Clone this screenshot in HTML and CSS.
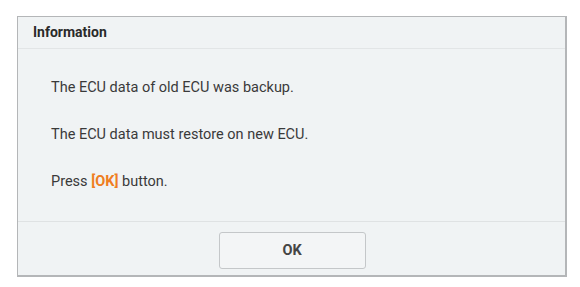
FILE: index.html
```html
<!DOCTYPE html>
<html>
<head>
<meta charset="utf-8">
<link rel="stylesheet" href="styles.css">
</head>
<body>
<div class="dialog">
  <div class="header">Information</div>
  <div class="content">
    <p class="line">The ECU data of old ECU was backup.</p>
    <p class="line">The ECU data must restore on new ECU.</p>
    <p class="line">Press <span class="hl">[OK]</span> button.</p>
  </div>
  <div class="footer">
    <button class="btn">OK</button>
  </div>
</div>
</body>
</html>
```
FILE: styles.css
```css
html, body {
  margin: 0;
  padding: 0;
  background: #ffffff;
}
body {
  padding: 16px 12px 10px 17px;
  font-family: Roboto, "Noto Sans", sans-serif;
  color: #3a3a3a;
}
.dialog {
  width: 550px;
  height: 261px;
  box-sizing: border-box;
  border: 1px solid #b4b6b8;
  border-bottom-width: 2px;
  border-right-width: 2px;
  background: #f0f3f4;
  display: flex;
  flex-direction: column;
}
.header {
  height: 32px;
  box-sizing: border-box;
  border-bottom: 1px solid #e2e5e6;
  padding-left: 15px;
  display: flex;
  align-items: center;
  font-weight: bold;
  font-size: 14px;
  color: #2a2a2a;
}
.content {
  flex: 1;
  padding: 31px 0 0 33px;
}
.line {
  margin: 0 0 31px 0;
  font-size: 14.5px;
  line-height: 16px;
}
.hl {
  color: #ef7d22;
  font-weight: bold;
}
.footer {
  height: 55px;
  box-sizing: border-box;
  border-top: 1px solid #dfe2e3;
  display: flex;
  justify-content: center;
  padding-top: 10px;
}
.btn {
  width: 147px;
  height: 37px;
  margin-left: 1px;
  box-sizing: border-box;
  border: 1px solid #c4c7c9;
  border-radius: 3px;
  background: #f3f5f6;
  font-family: Roboto, "Noto Sans", sans-serif;
  font-weight: bold;
  font-size: 14.5px;
  color: #454545;
  padding: 0;
}
```
